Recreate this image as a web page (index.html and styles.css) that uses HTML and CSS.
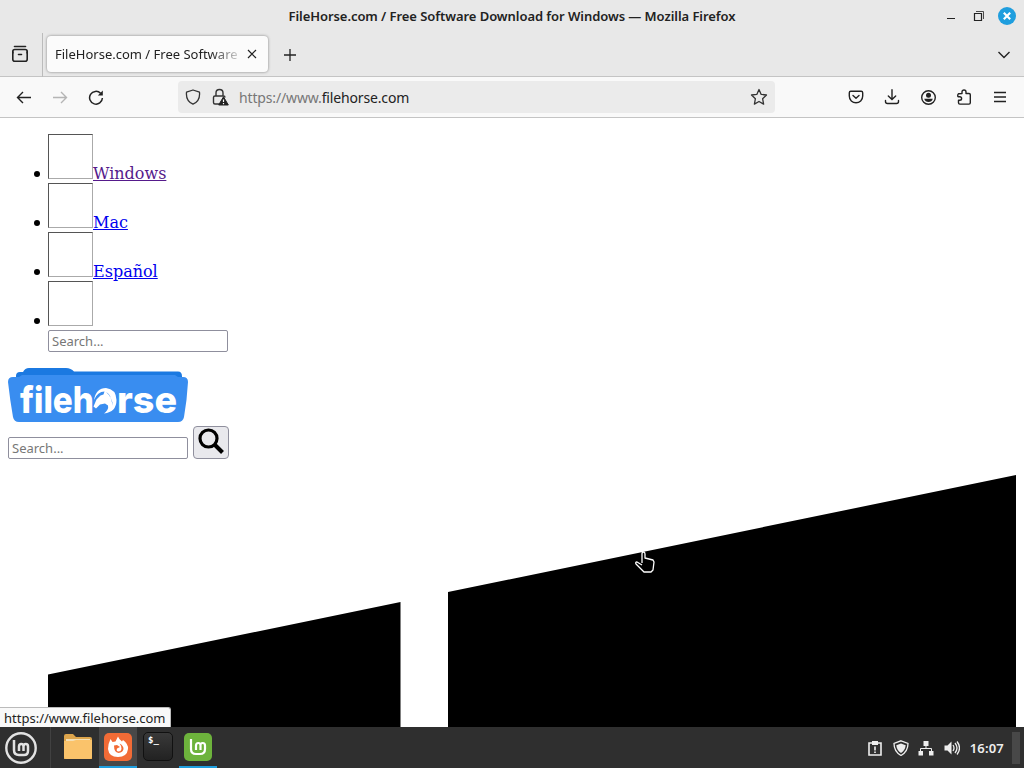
FILE: index.html
```html
<!DOCTYPE html>
<html lang="en">
<head>
  <meta charset="UTF-8">
  <title>FileHorse.com / Free Software Download for Windows</title>
  <link rel="stylesheet" href="styles.css">
</head>
<body>
  <header class="titlebar">
    <span class="window-title">FileHorse.com / Free Software Download for Windows — Mozilla Firefox</span>
    <div class="window-buttons">
      <svg width="16" height="16" viewBox="0 0 16 16"><path d="M5 10.500h8" stroke="#222"/></svg>
      <svg width="16" height="16" viewBox="0 0 16 16" fill="none" stroke="#222"><path d="M4.500 5.500h7v7h-7z" stroke-width="1.200"/><path d="M6 3.500h7.500V11" stroke-width=".8"/></svg>
      <svg width="18" height="18" viewBox="0 0 18 18"><circle cx="9" cy="9" r="9" fill="#1f9ede"/><path d="M5.800 5.800l6.400 6.400M12.200 5.800l-6.400 6.400" stroke="#fff" stroke-width="2.200"/></svg>
    </div>
  </header>

  <div class="tabbar">
    <div class="firefox-view">
      <svg width="18" height="18" viewBox="0 0 18 18" fill="none" stroke="#222" stroke-width="1.600" stroke-linecap="round"><path d="M3.500 1.500h11"/><path d="M1.800 8V6.500q0-2 2-2h10.400q2 0 2 2V8"/><path d="M1.800 7v7.200q0 2 2 2h10.400q2 0 2-2V7M7.500 9.500h3"/></svg>
    </div>
    <div class="tab">
      <span class="tab-title">FileHorse.com / Free Software D</span>
      <svg width="10" height="10" viewBox="0 0 10 10"><path d="M1 1l8 8M9 1L1 9" stroke="#222" stroke-width="1.200"/></svg>
    </div>
    <svg class="new-tab" width="14" height="14" viewBox="0 0 14 14"><path d="M7 1v12M1 7h12" stroke="#222" stroke-width="1.300"/></svg>
    <svg class="all-tabs" width="14" height="14" viewBox="0 0 14 14"><path d="M1.500 4L7 9.500 12.500 4" fill="none" stroke="#222" stroke-width="1.400"/></svg>
  </div>

  <div class="toolbar">
    <div class="nav-buttons">
      <svg width="16" height="16" viewBox="0 0 16 16" fill="none" stroke="#222" stroke-width="1.400"><path d="M15 8.500H1.500M7 3L1.500 8.500 7 14"/></svg>
      <svg width="16" height="16" viewBox="0 0 16 16" fill="none" stroke="#b5b5b5" stroke-width="1.400"><path d="M1 8.500h13.500M9 3l5.500 5.500L9 14"/></svg>
      <svg width="16" height="16" viewBox="0 0 16 16" fill="none" stroke="#222" stroke-width="1.500"><path d="M14.400 9A6.400 6.400 0 1 1 12.600 4.300"/><path d="M14.800 1.500v5H9.800z" fill="#222" stroke="none"/></svg>
    </div>
    <div class="urlbar">
      <svg width="16" height="16" viewBox="0 0 16 16"><path d="M8 1l6.500 2.200c.5 5-1 9.500-6.500 12-5.500-2.500-7-7-6.500-12z" fill="none" stroke="#333" stroke-width="1.300" stroke-linejoin="round"/></svg>
      <svg class="lock" width="18" height="18" viewBox="0 0 18 18"><path d="M5 8V5q0-3.500 3.500-3.500T12 5v3M8 16H4q-1.500 0-1.500-1.500v-5Q2.500 8 4 8h8.500q1.500 0 1.500 1.500" fill="none" stroke="#333" stroke-width="1.400"/><path d="M12.500 8.800L17.300 17H7.700z" fill="#222" stroke="#222" stroke-linejoin="round"/><path d="M12.500 11.500v2.600m0 1v1.200" stroke="#fff" stroke-width="1.200"/></svg>
      <span class="url">https://www.<b>filehorse.com</b></span>
      <svg class="star" width="18" height="18" viewBox="0 0 18 18"><path d="M9 1.500l2.200 4.900 5.300.6-3.900 3.700 1 5.400L9 13.500l-4.600 2.600 1-5.400L1.500 7l5.300-.6z" fill="none" stroke="#333" stroke-width="1.300" stroke-linejoin="round"/></svg>
    </div>
    <div class="tool-buttons">
      <svg width="16" height="16" viewBox="0 0 16 16" fill="none" stroke="#222" stroke-width="1.400" stroke-linecap="round" stroke-linejoin="round"><path d="M2.800 2.200h10.400q1.500 0 1.500 1.500V7q0 3-2 4.900T8 13.800q-2.700 0-4.700-1.900T1.300 7V3.700q0-1.500 1.500-1.500z"/><path d="M5 6.500l3 2.700 3-2.700"/></svg>
      <svg width="16" height="16" viewBox="0 0 16 16" fill="none" stroke="#222" stroke-width="1.400" stroke-linecap="round"><path d="M8 .7v9.800M4.300 7L8 10.500 11.700 7M1.500 11.500v1q0 2 2 2h9q2 0 2-2v-1"/></svg>
      <svg width="16" height="16" viewBox="0 0 16 16"><circle cx="8.500" cy="8.500" r="6.800" fill="none" stroke="#222" stroke-width="1.400"/><circle cx="8.500" cy="6.300" r="2.500" fill="#222"/><path d="M4.200 9.800h8.600q-1 3.300-4.300 3.300t-4.300-3.300z" fill="#222"/></svg>
      <svg width="16" height="16" viewBox="0 0 16 16"><path d="M6 4.500V3a2 2 0 0 1 4 0v1.500h3q1.300 0 1.300 1.300v8q0 1.300-1.300 1.300H3.800q-1.300 0-1.300-1.300v-2.500h1.300a1.800 1.800 0 0 0 0-3.600H2.300c-.8 0-.8-2 .2-3z" fill="none" stroke="#222" stroke-width="1.400" stroke-linejoin="round"/></svg>
      <svg width="16" height="16" viewBox="0 0 16 16"><path d="M2 3.500h12M2 8h12M2 12.500h12" stroke="#222" stroke-width="1.300"/></svg>
    </div>
  </div>

  <main class="page">
    <ul class="menu">
      <li><a class="visited" href="#"><span class="thumb"></span>Windows</a></li>
      <li><a href="#"><span class="thumb"></span>Mac</a></li>
      <li><a href="#"><span class="thumb"></span>Español</a></li>
      <li><span class="thumb"></span>
        <input class="search" type="text" placeholder="Search...">
      </li>
    </ul>

    <svg class="logo" width="180" height="54" viewBox="0 0 180 54">
      <path d="M8 12V8q0-4 4-4h3q2-4 6-4h37q5 0 8 3.500h104q4 0 4 5V12z" fill="#1b79e1"/>
      <path d="M5 9h6l3-2h153l3 2h5q5 0 5 5-1 18-4 35-1 5-6 5H11q-5 0-6-5Q2 32 0 14q0-5 5-5z" fill="#398df0"/>
      <text class="logo-text" x="12" y="44.500" textLength="74" lengthAdjust="spacingAndGlyphs">fileh</text>
      <!-- horse head in place of the letter o -->
      <path d="M86 32q2-12 12-12 10 1 10.500 12 0 12-12.500 13.500 5-4 4-8l-3-2-5 1-4 4-2.500-2 3-7 4-4 3-1 1-3q-7 0-10.500 8.500z" fill="#fff"/>
      <path d="M98 24q4 2 5 7l2 7q-1-9-7-14z" fill="#398df0"/>
      <text class="logo-text" x="109" y="44.500" textLength="60" lengthAdjust="spacingAndGlyphs">rse</text>
    </svg>

    <form class="search-form">
      <input class="search" type="text" placeholder="Search...">
      <button class="search-button" type="button">
        <svg width="26" height="26" viewBox="0 0 26 26" fill="none" stroke="#000"><circle cx="10.500" cy="10.500" r="8.500" stroke-width="3.200"/><path d="M16.500 16.500l8 8" stroke-width="4"/></svg>
      </button>
    </form>

    <svg class="windows-icon" width="968" height="252" viewBox="0 0 968 252">
      <path d="M0 199.500L352.500 127v125H0zM400 117L968 0v252H400z"/>
    </svg>

    <div class="status">https://www.filehorse.com</div>
    <svg class="pointer" width="22" height="24" viewBox="0 0 22 24"><path d="M8 13V4q0-2 1.500-2T11 4v4l8 2 1 2-1 8-2 2h-7l-8-8q-1-2 1-2l5 3" fill="#000" stroke="#fff" stroke-width="1.300" stroke-linejoin="round"/></svg>
  </main>

  <footer class="taskbar">
    <div class="start">
      <svg width="32" height="32" viewBox="0 0 32 32" fill="none" stroke="#e2e2e2"><circle cx="16" cy="16" r="14.700" stroke-width="2.400"/><path d="M9 8v10q0 5 5 5h5q4 0 4-4v-4.500q0-2.500-2.200-2.500t-2.300 2.500V19m0-4.500q0-2.500-2.200-2.500T14 14.500V19" stroke-width="2.500"/></svg>
    </div>
    <div class="task">
      <svg width="28" height="26" viewBox="0 0 28 26"><path d="M0 2q0-2 2-2h7l3 3h14q2 0 2 2v20H0z" fill="#dda54c"/><path d="M2 5h24v5H2z" fill="#f4dfb5"/><path d="M0 7h9l3-1h16v17q0 2-2 2H2q-2 0-2-2z" fill="#fac36b"/></svg>
    </div>
    <div class="task active">
      <svg width="28" height="28" viewBox="0 0 28 28"><rect width="28" height="28" rx="5" fill="#f26b36"/><path d="M6.500 6l2 3 3-.5 2.500-5q1 3 4 5l1-1.500q5.500 4 5 9-1 8-10 8T4 16q0-5 2.500-10z" fill="#fff"/><path d="M10 12.500l3-.5 3 2-3 1.500q-1 3 1.500 3 2.500 0 3-2.500.3-3-2-5.500 4 2 4 5.500-.5 3.500-5 4-4.500-.5-4.500-7.500z" fill="#f26b36"/></svg>
    </div>
    <div class="task">
      <div class="terminal">$_</div>
    </div>
    <div class="task open">
      <svg width="28" height="28" viewBox="0 0 28 28"><rect width="28" height="28" rx="5" fill="#6db33c"/><path d="M7 6v10q0 5 5 5h4q5 0 5-5v-3.500q0-2.500-2.300-2.500t-2.200 2.500V17m0-4.500q0-2.500-2.200-2.500T12 12.500V17" fill="none" stroke="#fff" stroke-width="2.200"/></svg>
    </div>
    <div class="tray">
      <svg width="16" height="16" viewBox="0 0 16 16"><path d="M2 3h12v12H2z" fill="none" stroke="#eee" stroke-width="1.600"/><path d="M5 1h6v4H5zM7.200 6.500h1.600v4H7.200zm0 5h1.600V13H7.200z" fill="#eee"/></svg>
      <svg width="16" height="16" viewBox="0 0 16 16"><path d="M8 .8l7 2.700q0 8-7 12-7-4-7-12z" fill="none" stroke="#eee" stroke-width="1.300"/><path d="M8 3.500l4.700 1.800q-.5 5-4.700 7.700-4.200-2.700-4.700-7.700z" fill="#eee"/></svg>
      <svg width="16" height="16" viewBox="0 0 16 16"><path d="M5.500 1h5v5h-5zM.5 11h4.500v4.500H.5zM11 11h4.500v4.500H11z" fill="#eee"/><path d="M8 6v3M2.500 11V8.500h11V11" fill="none" stroke="#eee"/></svg>
      <svg width="16" height="16" viewBox="0 0 16 16"><path d="M.5 5.500h3l4-4v13l-4-4h-3z" fill="#eee"/><path d="M9 5q2 3 0 6M11 3q4 5 0 10M13 1.500q5 6.500 0 13" fill="none" stroke="#eee" stroke-width="1.300"/></svg>
    </div>
    <span class="clock">16:07</span>
    <span class="show-desktop"></span>
  </footer>
</body>
</html>
```

FILE: styles.css
```css
* {
  box-sizing: border-box;
}
body {
  margin: 0;
  width: 1024px;
  height: 768px;
  overflow: hidden;
  display: flex;
  flex-direction: column;
  background: #fff;
  font-family: "Noto Sans", "Open Sans", sans-serif;
  color: #222;
}
svg {
  display: block;
  flex: none;
}
.titlebar {
  height: 33px;
  flex: none;
  display: grid;
  grid-template-columns: 1fr auto 1fr;
  align-items: center;
  padding-bottom: 1px;
  background: #e8e8e8;
}
.window-title {
  grid-column: 2;
  font-size: 13px;
  font-weight: 600;
  letter-spacing: -0.06px;
  white-space: nowrap;
}
.window-buttons {
  display: flex;
  justify-content: flex-end;
  align-items: center;
  gap: 12px;
  padding-right: 8px;
}
.tabbar {
  height: 44px;
  flex: none;
  display: flex;
  align-items: center;
  background: #e8e8e8;
  border-bottom: 1px solid #c4c4c4;
}
.firefox-view {
  width: 43px;
  height: 44px;
  padding: 12px 0 0 11px;
  border-right: 1px solid #bbb;
}
.tab {
  width: 221px;
  height: 36px;
  margin: 0 0 2px 4px;
  padding: 0 11px 0 8px;
  display: flex;
  align-items: center;
  justify-content: space-between;
  background: #fbfbfb;
  border-radius: 4px;
  box-shadow: 0 0 3px rgba(0, 0, 0, 0.45);
}
.tab-title {
  white-space: nowrap;
  width: 186px;
  font-size: 13px;
  letter-spacing: 0;
  mask-image: linear-gradient(to right, #000 155px, transparent 190px);
}
.new-tab {
  margin-left: 15px;
}
.all-tabs {
  margin: 0 13px 0 auto;
}
.toolbar {
  height: 41px;
  flex: none;
  display: flex;
  align-items: center;
  background: #f9f9f9;
  border-bottom: 1px solid #c4c4c4;
}
.nav-buttons {
  display: flex;
  gap: 20px;
  padding-left: 16px;
}
.urlbar {
  width: 597px;
  height: 32px;
  margin-left: 74px;
  padding: 0 7px;
  display: flex;
  align-items: center;
  background: #ebebeb;
  border-radius: 4px;
}
.lock {
  margin-left: 10px;
}
.url {
  margin-left: 10px;
  font-size: 14px;
  letter-spacing: -0.15px;
  color: #777;
}
.url b {
  font-weight: 400;
  color: #222;
}
.star {
  margin-left: auto;
}
.tool-buttons {
  display: flex;
  gap: 20px;
  margin: 0 16px 0 auto;
}
.page {
  position: relative;
  height: 609px;
  flex: none;
  overflow: hidden;
  padding: 16px 8px 0;
  font-family: "DejaVu Serif", serif;
  font-size: 16px;
  color: #000;
}
.menu {
  margin: 0 0 16px;
  padding-left: 40px;
  list-style: none;
}
.menu li::before {
  content: "";
  display: inline-block;
  width: 6px;
  height: 6px;
  margin: 0 8px 0 -14px;
  border-radius: 50%;
  background: #000;
  vertical-align: 2px;
}
.menu a {
  color: #0000ee;
}
.menu .visited {
  color: #551a8b;
}
.thumb {
  display: inline-block;
  width: 45px;
  height: 45px;
  border: 1px solid;
  border-color: #555 #aaa #aaa #555;
}
.search {
  display: block;
  width: 180px;
  height: 22px;
  padding: 0 3px;
  border: 1px solid #8f8f9d;
  border-radius: 2px;
  background: #fff;
  font: 13px "Noto Sans", sans-serif;
}
.search::placeholder {
  color: #777;
}
.logo-text {
  font: 800 37px Inter, sans-serif;
  fill: #fff;
}
.search-form {
  display: flex;
  align-items: flex-end;
  gap: 5px;
  margin: 4px 0 16px;
}
.search-button {
  width: 36px;
  height: 33px;
  padding: 1px 4px 5px;
  border: 1px solid #8f8f9d;
  border-radius: 4px;
  background: #e9e9ed;
}
.windows-icon {
  margin-left: 40px;
}
/* link target shown while hovering */
.status {
  position: absolute;
  left: 0;
  bottom: 0;
  width: 171px;
  height: 20px;
  padding-left: 4px;
  border-top: 1px solid #bbb;
  border-right: 1px solid #bbb;
  border-top-right-radius: 3px;
  background: #f9f9f9;
  font: 13px/21px "Noto Sans", sans-serif;
  color: #222;
  white-space: nowrap;
}
.pointer {
  position: absolute;
  left: 634px;
  top: 432px;
}
.taskbar {
  height: 41px;
  flex: none;
  display: flex;
  align-items: center;
  background: #2f2f2f;
}
.start {
  width: 51px;
  height: 41px;
  padding: 5px 0 0 5px;
  border-right: 1px solid #414141;
  margin-right: 8px;
}
.task {
  width: 38px;
  height: 41px;
  margin-right: 2px;
  display: flex;
  align-items: center;
  justify-content: center;
  border-bottom: 2px solid transparent;
}
.task.active {
  background: #484848;
  border-color: #1f9ede;
}
.task.open {
  border-color: #1f9ede;
}
.terminal {
  width: 30px;
  height: 29px;
  padding: 2px 4px;
  border: 1px solid #111;
  border-radius: 5px;
  background: linear-gradient(#393939, #222);
  font: bold 9px "DejaVu Sans Mono", monospace;
  color: #fff;
}
.tray {
  display: flex;
  gap: 9.500px;
  margin-left: auto;
}
.clock {
  margin-left: 10px;
  font-size: 13px;
  font-weight: 600;
  letter-spacing: 0.2px;
  color: #eee;
}
.show-desktop {
  width: 8px;
  height: 32px;
  margin: 0 4px 0 8px;
  background: #484848;
}
```
